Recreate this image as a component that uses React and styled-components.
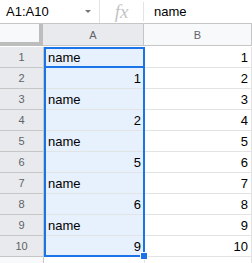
import React from "react";
import styled, { createGlobalStyle } from "styled-components";

const GlobalStyle = createGlobalStyle`
  html, body {
    margin: 0;
    padding: 0;
    background: #fff;
    font-family: "Liberation Sans", Arial, sans-serif;
    overflow: hidden;
  }
`;

const colA = ["name", "1", "name", "2", "name", "5", "name", "6", "name", "9"];

const Page = styled.div`
  width: 252px;
  height: 263px;
  overflow: hidden;
`;

const FormulaBar = styled.div`
  display: flex;
  align-items: center;
  height: 23px;
  border-bottom: 1px solid #c4c7c5;
  font-size: 13px;
  color: #000;
`;

const NameBox = styled.div`
  display: flex;
  align-items: center;
  width: 100px;
  height: 100%;
  padding-left: 6px;
  box-sizing: border-box;
  border-right: 1px solid #e3e3e3;
`;

const NameText = styled.span`
  flex: 1;
`;

const Caret = styled.span`
  width: 0;
  height: 0;
  margin-right: 8px;
  border-left: 3px solid transparent;
  border-right: 3px solid transparent;
  border-top: 3px solid #757575;
`;

const Fx = styled.div`
  width: 44px;
  height: 19px;
  box-sizing: border-box;
  border-right: 1px solid #e3e3e3;
  display: flex;
  align-items: center;
  justify-content: center;
  font-family: "Liberation Serif", "Times New Roman", serif;
  font-style: italic;
  font-size: 19px;
  color: #c4c4c4;
`;

const FormulaText = styled.div`
  padding-left: 10px;
`;

const Row = styled.div`
  display: flex;
  height: ${(p) => p.$h}px;
`;

const Corner = styled.div`
  width: 39px;
  height: 18px;
  background: #f8f9fa;
  border-right: 4px solid #bdbdbd;
  border-bottom: 4px solid #bdbdbd;
`;

const ColHead = styled.div`
  width: ${(p) => p.$w};
  flex: ${(p) => (p.$grow ? 1 : "none")};
  height: 22px;
  box-sizing: border-box;
  border-right: 1px solid #c4c7c5;
  border-bottom: 1px solid #c4c7c5;
  background: ${(p) => (p.$active ? "#e8eaed" : "#f8f9fa")};
  color: #5f6368;
  font-size: 11px;
  display: flex;
  align-items: center;
  justify-content: center;
`;

const RowHead = styled.div`
  width: 44px;
  height: 21px;
  box-sizing: border-box;
  border-right: 1px solid #c4c7c5;
  border-bottom: 1px solid #c4c7c5;
  background: ${(p) => (p.$active ? "#e8eaed" : "#f8f9fa")};
  color: #5f6368;
  font-size: 11px;
  display: flex;
  align-items: center;
  justify-content: center;
`;

const Cell = styled.div`
  width: ${(p) => p.$w};
  flex: ${(p) => (p.$grow ? 1 : "none")};
  height: 21px;
  box-sizing: border-box;
  border-right: 1px solid #e2e3e3;
  border-bottom: 1px solid #e2e3e3;
  background: ${(p) => (p.$selected ? "#e7f0fd" : "#fff")};
  font-size: 13px;
  line-height: 15px;
  color: #000;
  padding: 0 3px 2px 4px;
  display: flex;
  align-items: flex-end;
  justify-content: ${(p) => (p.$num ? "flex-end" : "flex-start")};
`;

const Body = styled.div`
  position: relative;
`;

const RangeBox = styled.div`
  position: absolute;
  left: 44px;
  top: 0;
  width: 101px;
  height: ${(p) => p.$h}px;
  box-sizing: border-box;
  border: 2px solid #1a73e8;
  pointer-events: none;
`;

const Handle = styled.div`
  position: absolute;
  left: 141px;
  top: 206px;
  width: 6px;
  height: 6px;
  background: #1a73e8;
  outline: 1px solid #fff;
`;

const Rest = styled.div`
  display: flex;
  height: 10px;
`;

const RestHead = styled.div`
  width: 44px;
  box-sizing: border-box;
  border-right: 1px solid #c4c7c5;
  background: #f8f9fa;
`;

const isNum = (v) => /^\d+$/.test(v);

export default function App() {
  return (
    <Page>
      <GlobalStyle />
      <FormulaBar>
        <NameBox>
          <NameText>A1:A10</NameText>
          <Caret />
        </NameBox>
        <Fx>fx</Fx>
        <FormulaText>name</FormulaText>
      </FormulaBar>
      <Row $h={23}>
        <Corner />
        <ColHead $w="101px" $active>
          A
        </ColHead>
        <ColHead $grow>B</ColHead>
      </Row>
      <Body>
        {colA.map((v, i) => (
          <Row key={i} $h={21}>
            <RowHead $active>{i + 1}</RowHead>
            <Cell $w="101px" $selected $num={isNum(v)}>
              {v}
            </Cell>
            <Cell $grow $num>
              {i + 1}
            </Cell>
          </Row>
        ))}
        <RangeBox $h={210} />
        <RangeBox $h={21} />
        <Handle />
        <Rest>
          <RestHead />
          <Cell $w="101px" />
          <Cell $grow />
        </Rest>
      </Body>
    </Page>
  );
}
